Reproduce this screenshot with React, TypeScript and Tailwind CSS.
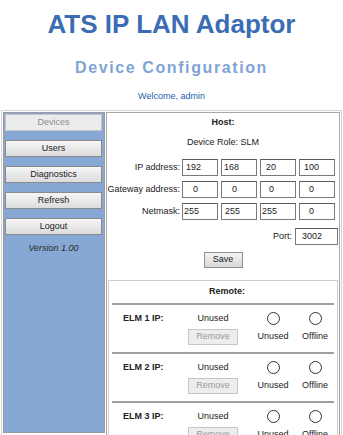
const NAV = [
  { label: "Devices", disabled: true },
  { label: "Users" },
  { label: "Diagnostics" },
  { label: "Refresh" },
  { label: "Logout" },
];

// left padding per value so the digits sit where the device page puts them
const ROWS = [
  { label: "IP address:", values: [["192", "pl-[3px]"], ["168", "pl-[2px]"], ["20", "pl-[5px]"], ["100", "pl-[4px]"]] },
  { label: "Gateway address:", values: [["0", "pl-[10px]"], ["0", "pl-[10px]"], ["0", "pl-[8px]"], ["0", "pl-[9px]"]] },
  { label: "Netmask:", values: [["255", "pl-[1px]"], ["255", "pl-[3px]"], ["255", "pl-[1px]"], ["0", "pl-[9px]"]] },
];

const ELMS = [1, 2, 3];

function Field({ value, pad, w = "w-[36px]" }: { value: string; pad: string; w?: string }) {
  return (
    <div
      className={`${w} h-[17px] border border-[#7a7a7a] border-t-[#5a5a5a] bg-white text-[9px] leading-[15px] text-[#222] ${pad}`}
    >
      {value}
    </div>
  );
}

function Circle() {
  return <div className="w-[13px] h-[13px] rounded-full border border-[#333] bg-white" />;
}

export default function App() {
  return (
    <div className="w-[343px] h-[435px] overflow-hidden bg-white font-['Liberation_Sans',Arial,sans-serif] text-[9px] text-[#222]">
      <div className="flex flex-col items-center">
        <h1 className="mt-[9px] text-[26px] leading-[30px] font-bold text-[#3b6db5]">ATS IP LAN Adaptor</h1>
        <h2 className="mt-[19px] text-[16px] leading-[20px] font-bold tracking-[0.1em] text-[#7fa3d6]">
          Device Configuration
        </h2>
        <p className="mt-[13px] text-[9px] leading-[11px] text-[#2a5db0]">Welcome, admin</p>
      </div>

      <div className="mt-[8px] ml-[1px] w-[341px] border border-[#d4d4d4] p-[1px] flex gap-[1px] items-start">
        {/* sidebar */}
        <div className="w-[102px] h-[321px] border border-[#9a9a9a] bg-[#87a8d4] flex flex-col pt-[1px] pl-[1px] pr-[2px]">
          <div className="flex flex-col gap-[9px]">
            {NAV.map((n) => (
              <div
                key={n.label}
                className={`h-[17px] flex items-center justify-center text-[9px] border ${
                  n.disabled
                    ? "border-[#c4c4c4] bg-[#ececec] text-[#8c8c8c]"
                    : "border-[#8a8a8a] bg-gradient-to-b from-[#f6f6f6] to-[#dcdcdc] text-[#222]"
                }`}
              >
                {n.label}
              </div>
            ))}
          </div>
          <p className="mt-[8px] text-center italic leading-[11px] text-[#2a2a2a]">Version 1.00</p>
        </div>

        {/* main */}
        <div className="flex-1 border border-[#a8a8a8] pb-[40px]">
          <div className="flex flex-col items-center">
            <p className="mt-[4px] font-bold leading-[11px]">Host:</p>
            <p className="mt-[9px] leading-[11px]">Device Role: SLM</p>
          </div>

          <div className="mt-[11px] flex flex-col gap-[5px]">
            {ROWS.map((r) => (
              <div key={r.label} className="flex items-center">
                <span className="w-[75px] pr-[2px] text-right leading-[11px]">{r.label}</span>
                <div className="flex gap-[3px]">
                  {r.values.map(([v, pad], i) => (
                    <Field key={i} value={v} pad={pad} />
                  ))}
                </div>
              </div>
            ))}
          </div>

          <div className="mt-[8px] flex items-center justify-end pr-[1px] gap-[3px]">
            <span className="leading-[11px]">Port:</span>
            <Field value="3002" pad="pl-[6px]" w="w-[43px]" />
          </div>

          <div className="mt-[7px] flex justify-center">
            <div className="w-[39px] h-[16px] border border-[#8f8f8f] bg-gradient-to-b from-[#f4f4f4] to-[#d6d6d6] flex items-center justify-center">
              Save
            </div>
          </div>

          {/* remote */}
          <div className="mt-[12px] mx-[1px] border border-[#cfcfcf] px-[3px]">
            <div className="grid grid-cols-[138px_46px_1fr]">
              <p className="col-span-2 text-center font-bold leading-[11px] pt-[5px] pb-[6px] pl-[46px]">Remote:</p>
            </div>
            {ELMS.map((n) => (
              <div key={n} className="border-t-2 border-[#a0a0a0] grid grid-cols-[64px_74px_46px_1fr] pt-[7px] pb-[7px]">
                <p className="pl-[11px] font-bold leading-[11px] pt-[1px]">ELM {n} IP:</p>
                <div className="flex flex-col items-center">
                  <p className="leading-[11px] pt-[1px]">Unused</p>
                  <div className="mt-[5px] w-[50px] h-[16px] border border-[#c6c6c6] bg-[#ededed] text-[#9a9a9a] flex items-center justify-center">
                    Remove
                  </div>
                </div>
                <div className="flex flex-col items-center">
                  <Circle />
                  <p className="mt-[6px] leading-[11px]">Unused</p>
                </div>
                <div className="flex flex-col items-center">
                  <Circle />
                  <p className="mt-[6px] leading-[11px]">Offline</p>
                </div>
              </div>
            ))}
          </div>
        </div>
      </div>
    </div>
  );
}
